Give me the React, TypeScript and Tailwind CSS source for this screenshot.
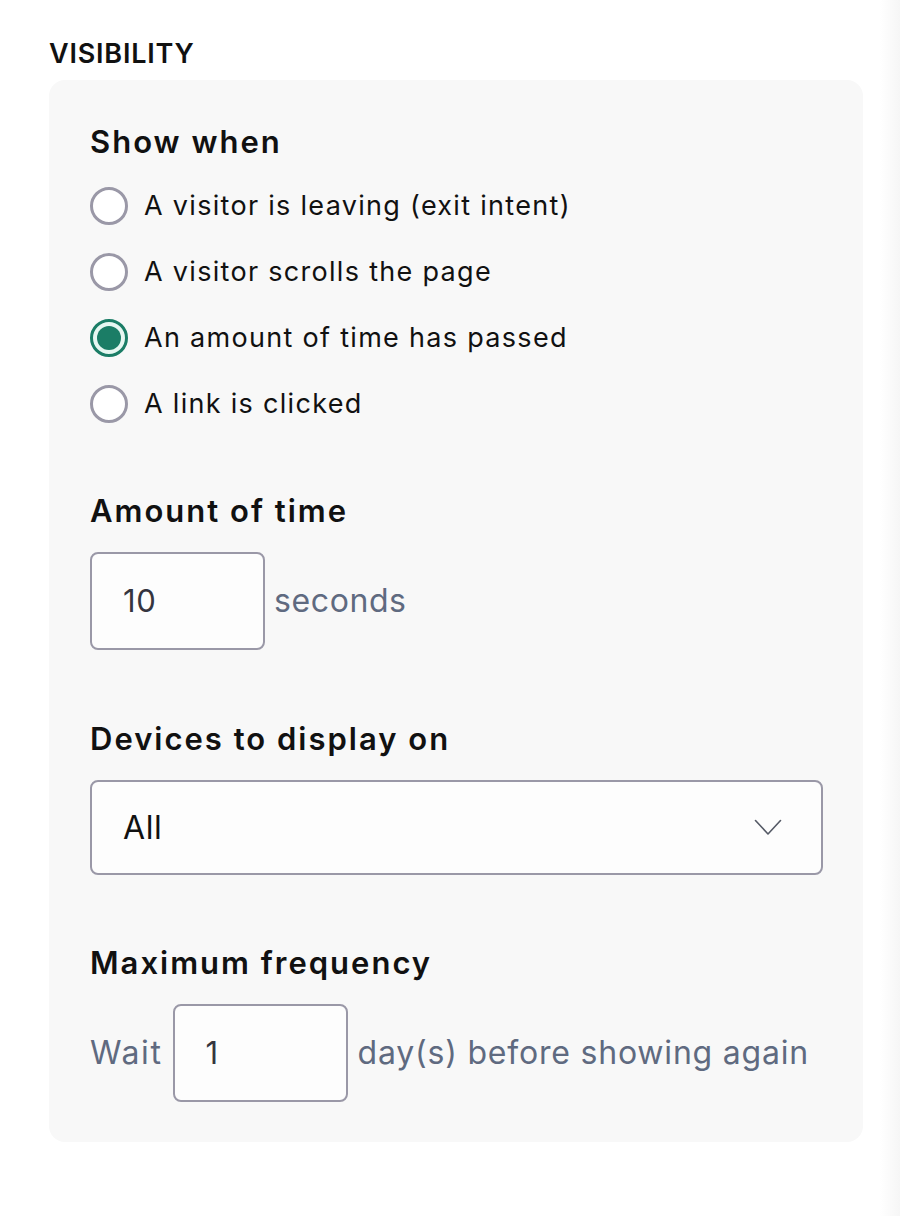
import React, { useState } from 'react';

const options = [
  'A visitor is leaving (exit intent)',
  'A visitor scrolls the page',
  'An amount of time has passed',
  'A link is clicked',
];

const font = { fontFamily: 'Inter, "Noto Sans", sans-serif' };

export default function App() {
  const [selected, setSelected] = useState(2);

  return (
    <div className="relative min-h-[1216px] w-[900px] bg-white" style={font}>
      <div className="absolute right-0 top-0 h-full w-[20px] bg-gradient-to-r from-white to-[#f6f6f6]" />
      <div className="px-[49px] pt-[38px]">
        <h2 className="text-[27px] font-semibold leading-[32px] tracking-[0.8px] text-[#111]">VISIBILITY</h2>
        <div className="mt-[10px] w-[814px] rounded-[16px] bg-[#f8f8f8] px-[41px] pt-[44px] pb-[40px]">
          <h3 className="text-[31px] font-semibold leading-[36px] tracking-[2px] text-[#111]">Show when</h3>
          <div className="mt-[27px] flex flex-col gap-[28px]">
            {options.map((label, i) => (
              <label key={label} className="flex h-[38px] cursor-pointer items-center gap-[16px]" onClick={() => setSelected(i)}>
                {selected === i ? (
                  <span className="flex h-[38px] w-[38px] items-center justify-center rounded-full border-[3px] border-[#1b7d66] bg-[#e6f7f1]">
                    <span className="h-[24px] w-[24px] rounded-full bg-[#1b7d66]" />
                  </span>
                ) : (
                  <span className="h-[38px] w-[38px] rounded-full border-[3px] border-[#9a98a7] bg-white" />
                )}
                <span className="text-[27px] leading-[32px] tracking-[1.3px] text-[#111]">{label}</span>
              </label>
            ))}
          </div>

          <h3 className="mt-[70px] text-[31px] font-semibold leading-[36px] tracking-[2px] text-[#111]">Amount of time</h3>
          <div className="mt-[23px] flex items-center gap-[9px]">
            <div className="flex h-[98px] w-[175px] items-center rounded-[8px] border-2 border-[#9a98a7] bg-[#fdfdfd] px-[31px] text-[31px] tracking-[0.6px] text-[#35353f]">10</div>
            <span className="text-[32px] tracking-[0.6px] text-[#5f6a80]">seconds</span>
          </div>

          <h3 className="mt-[71px] text-[31px] font-semibold leading-[36px] tracking-[2px] text-[#111]">Devices to display on</h3>
          <div className="mt-[23px] flex h-[95px] w-[733px] items-center justify-between rounded-[8px] border-2 border-[#9a98a7] bg-[#fdfdfd] pl-[31px] pr-[39px]">
            <span className="text-[32px] tracking-[0.6px] text-[#111]">All</span>
            <svg width="28" height="17" viewBox="0 0 28 17" fill="none">
              <path d="M1.5 1.5 L14 15 L26.5 1.5" stroke="#555a66" strokeWidth="1.6" strokeLinecap="round" strokeLinejoin="round" />
            </svg>
          </div>

          <h3 className="mt-[70px] text-[31px] font-semibold leading-[36px] tracking-[2px] text-[#111]">Maximum frequency</h3>
          <div className="mt-[23px] flex items-center gap-[10px]">
            <span className="text-[32px] tracking-[1.6px] text-[#5f6a80]">Wait</span>
            <div className="flex h-[98px] w-[175px] items-center rounded-[8px] border-2 border-[#9a98a7] bg-[#fdfdfd] px-[31px] text-[31px] text-[#35353f]">1</div>
            <span className="text-[32px] tracking-[0.8px] text-[#5f6a80]">day(s) before showing again</span>
          </div>
        </div>
      </div>
    </div>
  );
}
